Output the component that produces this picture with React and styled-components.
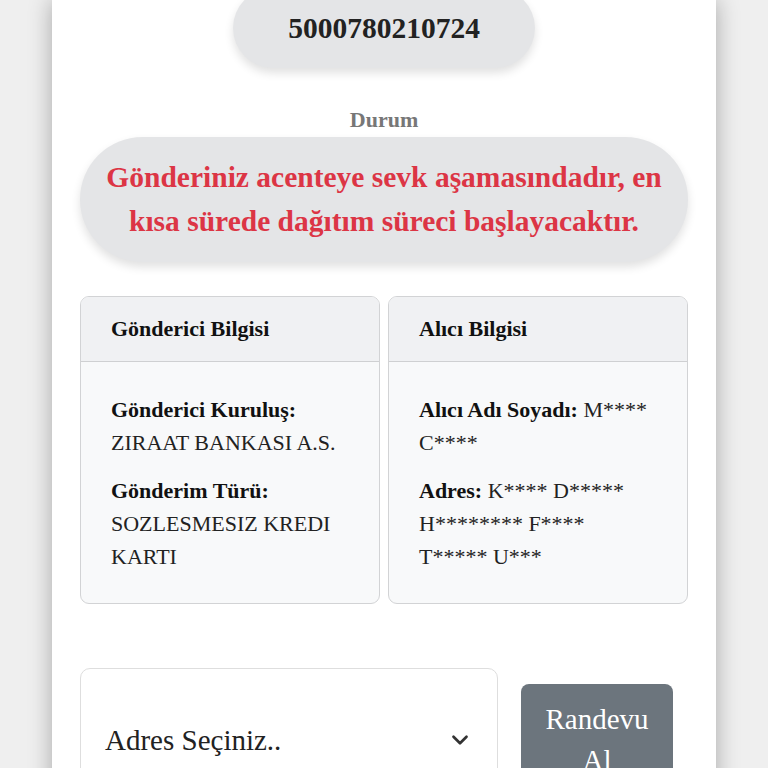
import React from 'react'
import styled, { createGlobalStyle } from 'styled-components'
import { ChevronDown } from 'lucide-react'

const GlobalStyle = createGlobalStyle`
  * { box-sizing: border-box; }
  body {
    margin: 0;
    background: #efefef;
    font-family: "Liberation Serif", "Times New Roman", serif;
    color: #212529;
  }
`

const Page = styled.div`
  width: 664px;
  margin: 0 auto;
  min-height: 900px;
  background: #fff;
  box-shadow: 0 0 22px rgba(0, 0, 0, 0.3);
  padding: 0 28px 40px;
  display: flex;
  flex-direction: column;
  align-items: center;
`

const TrackingPill = styled.div`
  margin-top: -12px;
  height: 80px;
  line-height: 80px;
  padding: 0 55px;
  border-radius: 40px;
  background: #e4e5e7;
  box-shadow: 0 5px 10px rgba(0, 0, 0, 0.12);
  font-size: 29.5px;
  font-weight: 700;
  color: #222;
`

const Label = styled.div`
  margin-top: 39px;
  font-size: 22px;
  font-weight: 700;
  color: #777;
  line-height: 26px;
`

const StatusPill = styled.div`
  margin-top: 4px;
  width: 100%;
  padding: 18px 20px 19px;
  border-radius: 63px;
  background: #e4e5e7;
  box-shadow: 0 5px 10px rgba(0, 0, 0, 0.12);
  text-align: center;
  font-size: 29.5px;
  font-weight: 700;
  line-height: 44px;
  color: #dc3545;
`

const Panels = styled.div`
  margin-top: 34px;
  width: 100%;
  display: grid;
  grid-template-columns: 1fr 1fr;
  gap: 8px;
`

const Panel = styled.div`
  border: 1.5px solid #d2d3d5;
  border-radius: 9px;
  overflow: hidden;
  background: #f8f9fa;
`

const PanelHeader = styled.div`
  background: #f0f1f3;
  border-bottom: 1.5px solid #cfd0d2;
  padding: 0 30px;
  height: 65px;
  display: flex;
  align-items: center;
  font-size: 22px;
  font-weight: 700;
  color: #111;
`

const PanelBody = styled.div`
  padding: 31px 30px 30px;
  display: flex;
  flex-direction: column;
  gap: 15px;
`

const Field = styled.p`
  margin: 0;
  font-size: 22px;
  line-height: 33px;
  color: #222;

  b {
    color: #111;
  }
`

const ActionRow = styled.div`
  margin-top: 64px;
  width: 100%;
  display: flex;
  align-items: center;
  gap: 23px;
`

const Select = styled.div`
  flex: 0 0 418px;
  height: 144px;
  border: 1.5px solid #dedede;
  border-radius: 10px;
  background: #fff;
  display: flex;
  align-items: center;
  justify-content: space-between;
  padding: 0 24px;
  font-size: 29px;
  color: #222;

  svg {
    color: #333;
  }
`

const Button = styled.button`
  width: 152px;
  border: none;
  border-radius: 8px;
  background: #6c757d;
  color: #fff;
  font-family: inherit;
  font-size: 29px;
  line-height: 41px;
  padding: 15px 20px;
  text-align: center;
`

export default function App() {
  return (
    <>
      <GlobalStyle />
      <Page>
        <TrackingPill>5000780210724</TrackingPill>
        <Label>Durum</Label>
        <StatusPill>
          Gönderiniz acenteye sevk aşamasındadır, en kısa sürede dağıtım süreci başlayacaktır.
        </StatusPill>
        <Panels>
          <Panel>
            <PanelHeader>Gönderici Bilgisi</PanelHeader>
            <PanelBody>
              <Field>
                <b>Gönderici Kuruluş:</b>
                <br />
                ZIRAAT BANKASI A.S.
              </Field>
              <Field>
                <b>Gönderim Türü:</b>
                <br />
                SOZLESMESIZ KREDI KARTI
              </Field>
            </PanelBody>
          </Panel>
          <Panel>
            <PanelHeader>Alıcı Bilgisi</PanelHeader>
            <PanelBody>
              <Field>
                <b>Alıcı Adı Soyadı:</b> M**** C****
              </Field>
              <Field>
                <b>Adres:</b> K**** D***** H******** F**** T***** U***
              </Field>
            </PanelBody>
          </Panel>
        </Panels>
        <ActionRow>
          <Select>
            <span>Adres Seçiniz..</span>
            <ChevronDown size={26} strokeWidth={2.5} />
          </Select>
          <Button>Randevu Al</Button>
        </ActionRow>
      </Page>
    </>
  )
}
